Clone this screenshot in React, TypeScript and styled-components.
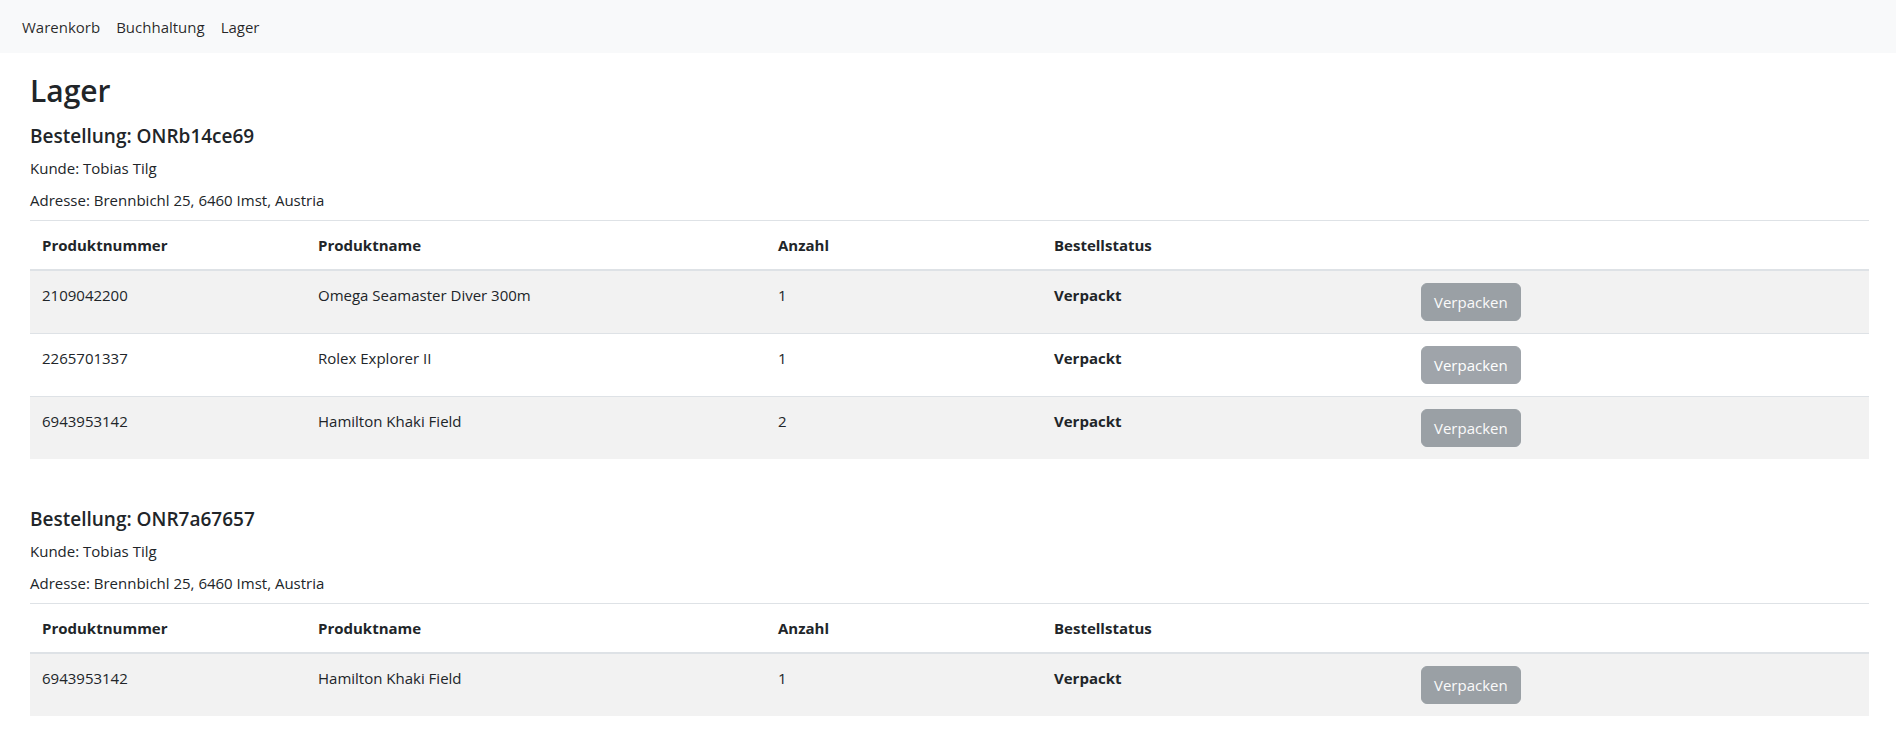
import React from "react";
import styled, { createGlobalStyle } from "styled-components";

const GlobalStyle = createGlobalStyle`
  *, *::before, *::after { box-sizing: border-box; }
  body {
    margin: 0;
    font-family: "Open Sans", "Noto Sans", "Liberation Sans", sans-serif;
    font-size: 15px;
    line-height: 24px;
    color: #212529;
    background: #fff;
  }
`;

const NavBar = styled.nav`
  height: 53px;
  background: #f8f9fa;
  display: flex;
  align-items: center;
  padding: 0 14px;
`;

const NavLink = styled.a`
  padding: 0 8px;
  color: rgba(0, 0, 0, 0.85);
  text-decoration: none;
  line-height: 24px;
  cursor: pointer;
`;

const Main = styled.main`
  padding: 19px 27px 0 30px;
`;

const PageTitle = styled.h2`
  margin: 0 0 14px;
  font-size: 30px;
  font-weight: 600;
  line-height: 38px;
`;

const Orders = styled.div`
  display: flex;
  flex-direction: column;
  gap: 48px;
`;

const Order = styled.section``;

const OrderTitle = styled.h5`
  margin: 0 0 8px;
  font-size: 19px;
  font-weight: 600;
  line-height: 24px;
`;

const Info = styled.p`
  margin: 0 0 8px;
`;

const Table = styled.table`
  width: 100%;
  border-collapse: collapse;
  table-layout: fixed;
`;

const Col = styled.col<{ $w?: number }>`
  width: ${(p) => (p.$w ? `${p.$w}px` : "auto")};
`;

const HeadRow = styled.tr`
  border-top: 1px solid #dee2e6;
  border-bottom: 2px solid #dee2e6;
`;

const Th = styled.th`
  padding: 12px;
  text-align: left;
  font-weight: 700;
  vertical-align: top;
`;

const Row = styled.tr<{ $striped: boolean; $last: boolean }>`
  background: ${(p) => (p.$striped ? "#f2f2f2" : "#fff")};
  border-bottom: ${(p) => (p.$last ? "none" : "1px solid #dee2e6")};
`;

const Td = styled.td`
  padding: 12px;
  vertical-align: top;
`;

const Status = styled.strong`
  font-weight: 700;
`;

const ActionButton = styled.button`
  font-family: inherit;
  font-size: 15px;
  line-height: 24px;
  padding: 6px 12px;
  border: 1px solid #6c757d;
  border-radius: 6px;
  background: #6c757d;
  color: #fff;
  opacity: 0.65;
  cursor: default;
`;

type Item = { nr: string; name: string; qty: number; status: string };
type OrderData = { id: string; customer: string; address: string; items: Item[] };

const orders: OrderData[] = [
  {
    id: "ONRb14ce69",
    customer: "Tobias Tilg",
    address: "Brennbichl 25, 6460 Imst, Austria",
    items: [
      { nr: "2109042200", name: "Omega Seamaster Diver 300m", qty: 1, status: "Verpackt" },
      { nr: "2265701337", name: "Rolex Explorer II", qty: 1, status: "Verpackt" },
      { nr: "6943953142", name: "Hamilton Khaki Field", qty: 2, status: "Verpackt" },
    ],
  },
  {
    id: "ONR7a67657",
    customer: "Tobias Tilg",
    address: "Brennbichl 25, 6460 Imst, Austria",
    items: [{ nr: "6943953142", name: "Hamilton Khaki Field", qty: 1, status: "Verpackt" }],
  },
];

export default function App() {
  return (
    <>
      <GlobalStyle />
      <NavBar>
        <NavLink>Warenkorb</NavLink>
        <NavLink>Buchhaltung</NavLink>
        <NavLink>Lager</NavLink>
      </NavBar>
      <Main>
        <PageTitle>Lager</PageTitle>
        <Orders>
          {orders.map((o) => (
            <Order key={o.id}>
              <OrderTitle>Bestellung: {o.id}</OrderTitle>
              <Info>Kunde: {o.customer}</Info>
              <Info>Adresse: {o.address}</Info>
              <Table>
                <colgroup>
                  <Col $w={276} />
                  <Col $w={460} />
                  <Col $w={276} />
                  <Col $w={367} />
                  <Col />
                </colgroup>
                <thead>
                  <HeadRow>
                    <Th>Produktnummer</Th>
                    <Th>Produktname</Th>
                    <Th>Anzahl</Th>
                    <Th>Bestellstatus</Th>
                    <Th></Th>
                  </HeadRow>
                </thead>
                <tbody>
                  {o.items.map((it, i) => (
                    <Row key={it.nr + i} $striped={i % 2 === 0} $last={i === o.items.length - 1}>
                      <Td>{it.nr}</Td>
                      <Td>{it.name}</Td>
                      <Td>{it.qty}</Td>
                      <Td>
                        <Status>{it.status}</Status>
                      </Td>
                      <Td>
                        <ActionButton disabled>Verpacken</ActionButton>
                      </Td>
                    </Row>
                  ))}
                </tbody>
              </Table>
            </Order>
          ))}
        </Orders>
      </Main>
    </>
  );
}
